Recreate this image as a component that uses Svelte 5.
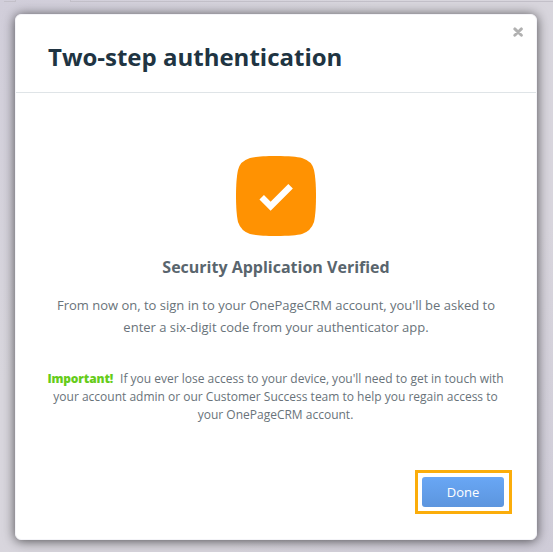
<script lang="ts">
	let open = $state(true);

	function close(): void {
		open = false;
	}
</script>

<div class="backdrop">
	<div class="page-edge">
		<span></span>
		<span></span>
	</div>
	{#if open}
		<div class="modal" role="dialog" aria-labelledby="modal-title">
			<header>
				<h1 id="modal-title">Two-step authentication</h1>
				<button class="close" aria-label="Close" onclick={close}>
					<svg viewBox="0 0 10 10" width="10" height="10">
						<path d="M1.8 1.9l6.6 6.4M8.4 1.9L1.8 8.3" />
					</svg>
				</button>
			</header>
			<section>
				<svg class="badge" viewBox="0 0 80 80" width="80" height="80">
					<path class="tile" d="M40 0C53 0 61 .8 66 2Q76 5 78 14C79.3 20 80 29 80 40S79.3 60 78 66Q75 75 66 78C61 79.2 53 80 40 80S19 79.2 14 78Q5 75 2 66C.7 60 0 51 0 40S.7 20 2 14Q4 5 14 2C19 .8 27 0 40 0Z" />
					<path class="check" d="M25.7 41.3L34.6 50.2L54.6 30.2" />
				</svg>
				<h2>Security Application Verified</h2>
				<p>
					From now on, to sign in to your OnePageCRM account, you'll be asked to<br />
					enter a six-digit code from your authenticator app.
				</p>
				<p class="note">
					<strong>Important!</strong>If you ever lose access to your device, you'll need to get in touch with<br />
					your account admin or our Customer Success team to help you regain access to<br />
					your OnePageCRM account.
				</p>
			</section>
			<footer>
				<div class="highlight">
					<button class="done" onclick={close}>Done</button>
				</div>
			</footer>
		</div>
	{/if}
</div>

<style>
	:global(body) {
		overflow: hidden;
	}
	.backdrop {
		position: relative;
		box-sizing: border-box;
		height: 552px;
		padding: 14px 16px 12px 15px;
		background: linear-gradient(135deg, #d1ceda 0%, #d8d6dd 35%, #d8d5dd 70%, #cfccd8 100%);
		font-family: 'Open Sans', sans-serif;
		color: #59656d;
	}
	/* the page behind the dialog, peeking out above it */
	.page-edge {
		position: absolute;
		top: 0;
		left: 4px;
		right: 0;
		display: flex;
		gap: 54px;
	}
	.page-edge span {
		box-sizing: border-box;
		width: 12px;
		height: 2px;
		border: 1px solid #c3c0c9;
		border-width: 0 1px 1px 0;
	}
	.page-edge span:last-child {
		flex: 1;
		border-width: 0 0 1px 1px;
	}
	.modal {
		position: relative;
		display: flex;
		flex-direction: column;
		box-sizing: border-box;
		height: 526px;
		background: #fff;
		border: 1px solid #f4f4f8;
		border-radius: 6px;
		box-shadow: 0 1px 12px rgba(0, 0, 0, .65);
	}
	header {
		display: flex;
		justify-content: space-between;
		align-items: flex-start;
		box-sizing: border-box;
		height: 78px;
		padding: 0 13px 0 32px;
		border-bottom: 1px solid #dfe4e7;
	}
	h1 {
		margin: 25px 0 0;
		font-size: 24px;
		font-weight: 700;
		line-height: 34px;
		color: #203442;
	}
	button {
		border: none;
		font: inherit;
		cursor: pointer;
	}
	.close {
		display: flex;
		margin-top: 12px;
		padding: 0;
		background: none;
	}
	.close path {
		fill: none;
		stroke: #b1b1b1;
		stroke-width: 2.9;
		stroke-linecap: round;
	}
	section {
		flex: 1;
		padding-top: 63px;
		text-align: center;
	}
	.badge {
		display: block;
		margin: 0 auto;
	}
	.tile {
		fill: #ff9202;
	}
	.check {
		fill: none;
		stroke: #fff;
		stroke-width: 6.4;
	}
	h2 {
		margin: 20px 0 0;
		font-size: 16px;
		font-weight: 700;
		line-height: 22px;
	}
	p {
		margin: 16px 0 0;
		font-size: 13px;
		line-height: 22px;
		white-space: nowrap;
		color: #69737a;
	}
	.note {
		margin: 32px 1px 0 0;
		font-size: 12px;
		line-height: 18px;
	}
	strong {
		margin-right: 7px;
		font-weight: 800;
		letter-spacing: -.15px;
		color: #66cc1a;
	}
	footer {
		display: flex;
		justify-content: flex-end;
		padding: 0 24px 25px;
	}
	.highlight {
		padding: 4px 5px 4px 4px;
		border: 3px solid #fbad0b;
	}
	.done {
		display: block;
		width: 82px;
		height: 30px;
		padding: 0;
		border-radius: 3px;
		background: linear-gradient(#69a7f5, #5c95de);
		color: #fff;
		font-size: 13px;
	}
</style>
